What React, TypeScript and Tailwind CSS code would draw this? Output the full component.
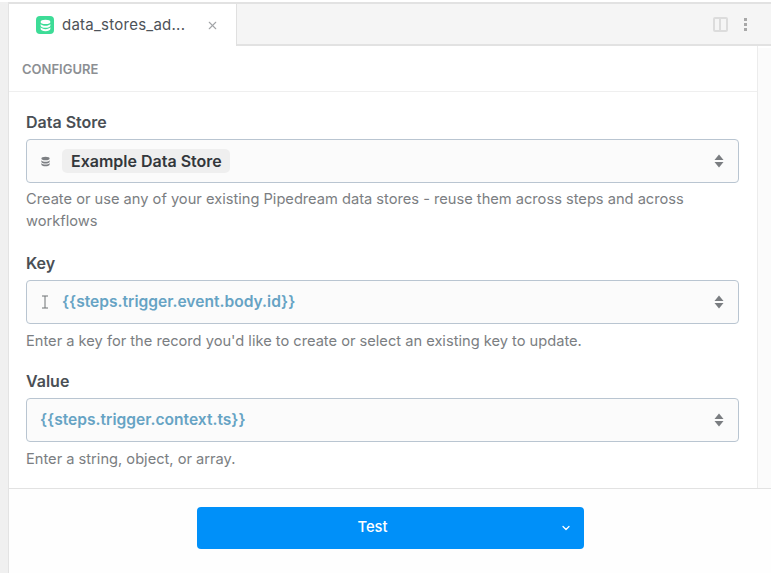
import { ChevronDown, X } from "lucide-react";
import type { ReactNode } from "react";

const DbIcon = ({ className }: { className?: string }) => (
  <svg viewBox="0 0 16 16" className={className} fill="currentColor">
    <ellipse cx="8" cy="3.600" rx="6" ry="2.600" />
    <path d="M2 6c1 1.500 3.400 2.200 6 2.200s5-.7 6-2.200v2.200c0 1.400-2.700 2.600-6 2.600s-6-1.200-6-2.600z" />
    <path d="M2 10.300c1 1.500 3.400 2.200 6 2.200s5-.7 6-2.200v2.100c0 1.400-2.700 2.600-6 2.600s-6-1.200-6-2.600z" />
  </svg>
);

const Sort = () => (
  <svg viewBox="0 0 10 14" className="w-[10px] h-[14px] text-[#7a7d81]" fill="currentColor">
    <path d="M5 .5 9.500 6H.5z" />
    <path d="M5 13.500 .5 8h9z" />
  </svg>
);

const Field = ({ label, help, helpGap = "mt-[6px]", children }: { label: string; help: ReactNode; helpGap?: string; children: ReactNode }) => (
  <div className="flex flex-col">
    <div className="text-[16px] leading-[22px] font-semibold text-[#4a4f55]">{label}</div>
    <div className="mt-[6px] h-[44px] flex items-center justify-between pr-[14px] rounded-[4px] border border-[#b9c5d1] bg-[#fbfbfb]">
      <div className="flex items-center">{children}</div>
      <Sort />
    </div>
    <div className={`${helpGap} text-[14.65px] leading-[22px] text-[#7b7e82]`}>{help}</div>
  </div>
);

export default function App() {
  return (
    <div className="w-[771px] h-[573px] flex bg-white overflow-hidden font-['Inter',sans-serif]">
      <div className="w-[9px] shrink-0 bg-[#f0f0f0] border-r border-[#e3e3e3] mt-[2px]" />
      <div className="flex-1 flex flex-col min-w-0 pt-[2px]">
        {/* Tabs */}
        <div className="h-[44px] shrink-0 flex border-t-2 border-[#e2e2e2]">
          <div className="w-[228px] flex items-center pl-[27px] pr-[17px] bg-white border-r border-[#e0e0e0]">
            <div className="w-[18px] h-[18px] rounded-[4px] bg-[#3ddc97] flex items-center justify-center text-white">
              <DbIcon className="w-[13px] h-[13px]" />
            </div>
            <span className="ml-[8px] text-[15px] tracking-[0.25px] text-[#4d5258]">data_stores_ad...</span>
            <X className="ml-auto w-[13px] h-[13px] text-[#a3a5a8]" />
          </div>
          <div className="flex-1 flex items-center justify-end gap-[16px] pr-[24px] bg-[#f5f5f5] border-b-2 border-[#e2e2e2]">
            <div className="relative w-[15px] h-[15px] rounded-[2px] border-2 border-[#dcdcdc]">
              <div className="absolute left-[4px] top-[-2px] w-[2px] h-[15px] bg-[#dcdcdc]" />
            </div>
            <div className="flex flex-col gap-[2px]">
              <div className="w-[3px] h-[3px] bg-[#a8a8a8]" />
              <div className="w-[3px] h-[3px] bg-[#a8a8a8]" />
              <div className="w-[3px] h-[3px] bg-[#a8a8a8]" />
            </div>
          </div>
        </div>

        <div className="flex-1 flex min-h-0">
          <div className="flex-1 flex flex-col min-w-0 border-r border-[#ececec]">
            <div className="h-[46px] shrink-0 flex items-center pl-[13px] pt-[2px] border-b border-[#efefef] text-[13px] font-semibold text-[#8c8f93]">
              CONFIGURE
            </div>
            <div className="flex flex-col pt-[19px] pl-[17px] pr-[18px]">
              <Field
                label="Data Store"
                helpGap="mt-[5px]"
                help="Create or use any of your existing Pipedream data stores - reuse them across steps and across workflows"
              >
                <DbIcon className="ml-[13px] w-[11px] h-[11px] text-[#7c7f83]" />
                <span className="ml-[11px] h-[24px] pl-[9px] pr-[8px] flex items-center rounded-[5px] bg-[#efefef] text-[16px] font-semibold text-[#33373b]">
                  Example Data Store
                </span>
              </Field>
              <div className="mt-[20px]">
                <Field label="Key" help="Enter a key for the record you'd like to create or select an existing key to update.">
                  <svg viewBox="0 0 8 14" className="ml-[14px] mr-[1px] w-[8px] h-[14px] text-[#6f7275]" fill="none" stroke="currentColor" strokeWidth="1">
                    <path d="M1 1h6M1 13h6M4 1v12" />
                  </svg>
                  <span className="ml-[12px] text-[15.6px] font-semibold text-[#66a3c4]">{"{{steps.trigger.event.body.id}}"}</span>
                </Field>
              </div>
              <div className="mt-[18px]">
                <Field label="Value" help="Enter a string, object, or array.">
                  <span className="ml-[13px] text-[15.6px] font-semibold text-[#66a3c4]">{"{{steps.trigger.context.ts}}"}</span>
                </Field>
              </div>
            </div>
          </div>
          <div className="w-[13px] shrink-0 mt-[2px] bg-[#fbfbfb]" />
        </div>

        {/* Footer */}
        <div className="h-[85px] shrink-0 flex justify-center pt-[18px] bg-[#fefefe] border-t border-[#e2e2e2]">
          <button className="relative w-[387px] h-[42px] pr-[35px] pb-[1px] rounded-[4px] bg-[#0090f9] text-[14.8px] font-medium text-white">
            Test
            <ChevronDown strokeWidth={2.5} className="absolute right-[12px] top-[15px] w-[12px] h-[12px]" />
          </button>
        </div>
      </div>
    </div>
  );
}
